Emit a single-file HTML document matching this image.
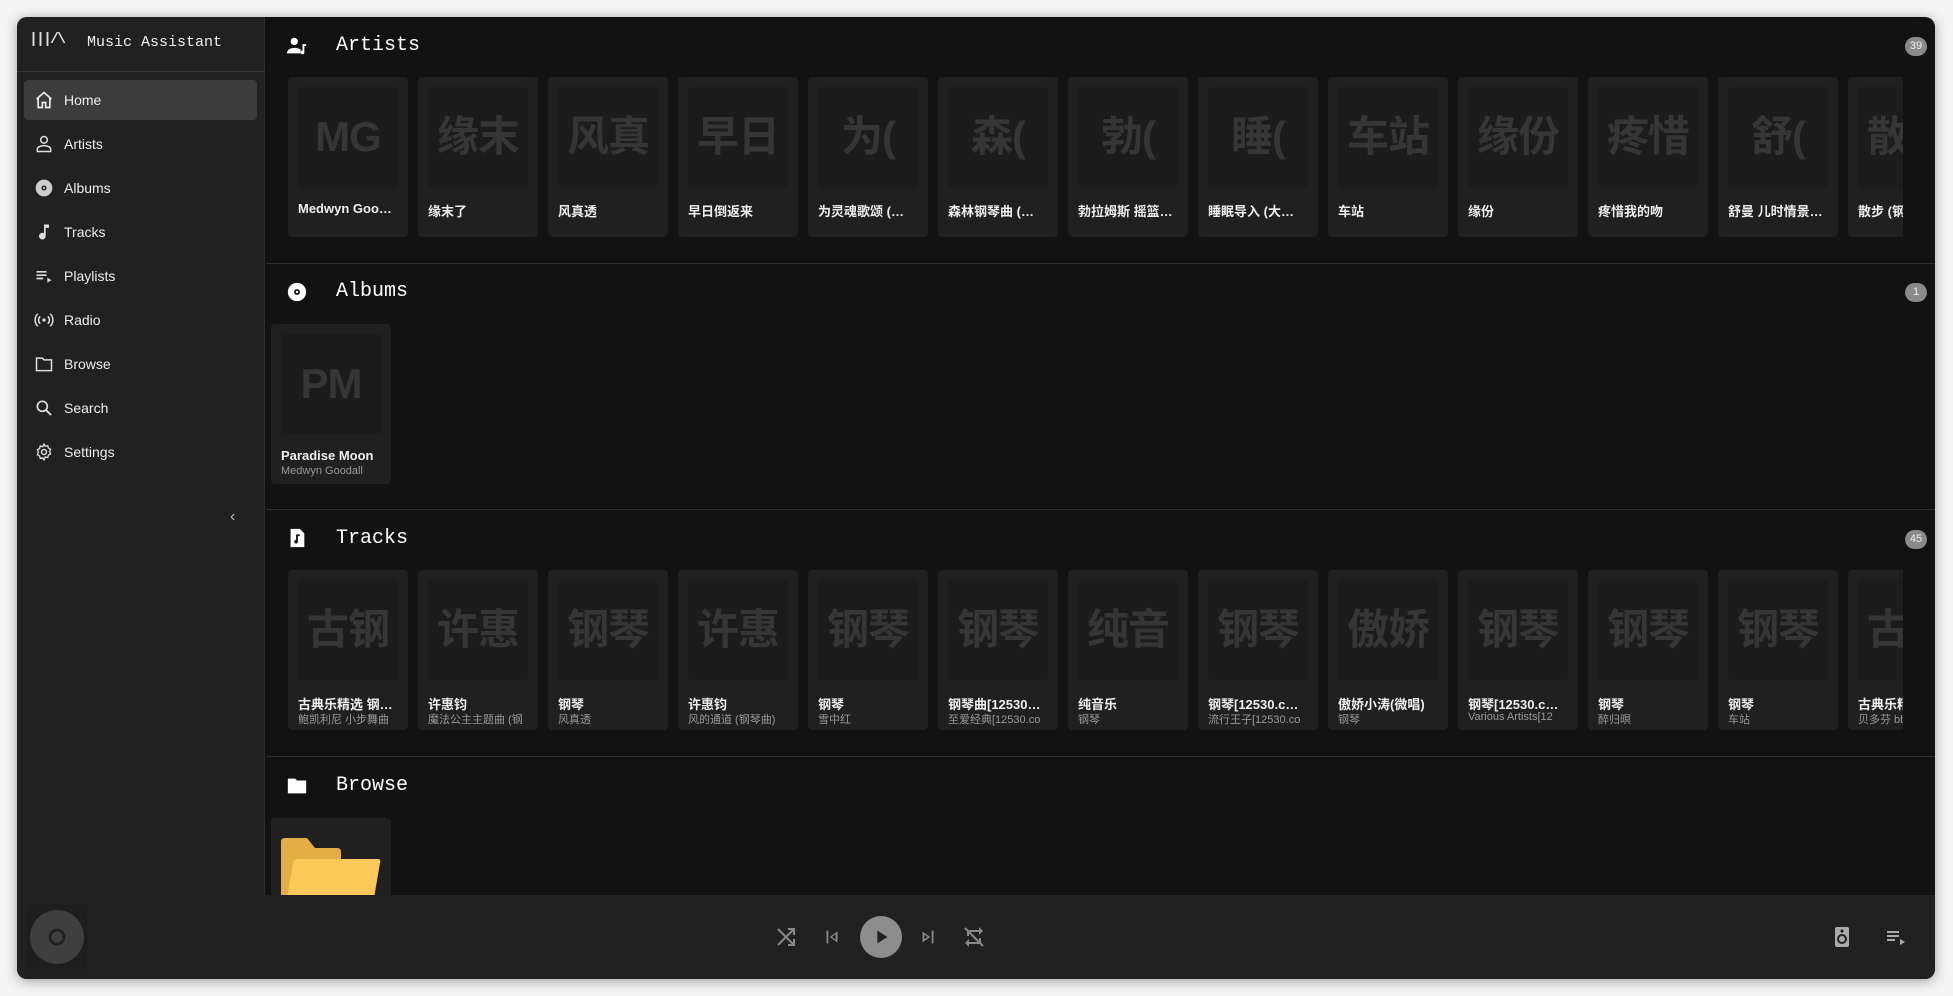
<!DOCTYPE html><html><head><meta charset="utf-8"><style>
*{box-sizing:border-box;margin:0;padding:0}
body{width:1953px;height:996px;background:#f4f4f4;position:relative;overflow:hidden;font-family:"Liberation Sans","Noto Sans CJK SC",sans-serif;color:#fff}
.win{position:absolute;left:17px;top:17px;width:1918px;height:962px;background:#121212;border-radius:10px;overflow:hidden;box-shadow:0 2px 12px rgba(0,0,0,.35)}
.side{position:absolute;left:0;top:0;width:248px;height:878px;background:#212121;border-right:1px solid #2e2e2e}
.logo{position:absolute;left:12px;top:14px;font:bold 15px "Liberation Mono",monospace;color:#ddd;letter-spacing:-2px}
.apptitle{position:absolute;left:70px;top:17px;font:15px "Liberation Mono",monospace;color:#eee}
.hdiv{position:absolute;left:0;top:54px;width:248px;height:1px;background:#333}
.nav{position:absolute;left:7px;width:233px;height:40px;border-radius:4px;font-size:14px;color:#eee}
.nav.act{background:#3c3c3c}
.nav svg{position:absolute;left:10px;top:10px}
.nav span{position:absolute;left:40px;top:12px}
.main{position:absolute;left:249px;top:0;right:0;height:878px}
.sh{position:absolute;left:0;right:0;height:1px;background:#2e2e2e}
.stitle{position:absolute;left:70px;font:20px "Liberation Mono",monospace;color:#fff}
.sicon{position:absolute;left:20px}
.badge{position:absolute;right:8px;width:22px;height:19px;border-radius:10px;background:#8a8a8a;font-size:11px;text-align:center;line-height:19px;color:#eee}
.row{position:absolute;left:22px;width:1615px;overflow:hidden;height:162px}
.card{position:absolute;top:0;width:120px;height:160px;background:#202020;border-radius:4px}
.card .im{position:absolute;left:10px;top:10px;width:100px;height:100px;background:#1c1c1c;border-radius:3px;font-weight:bold;font-size:42px;color:#363636;text-align:center;line-height:100px;white-space:nowrap;overflow:hidden;letter-spacing:-1px}
.card .t{position:absolute;left:10px;top:124px;width:104px;font-size:13px;font-weight:bold;white-space:nowrap;overflow:hidden;text-overflow:ellipsis;color:#eee}
.card .s{position:absolute;left:10px;top:141px;width:104px;font-size:11px;white-space:nowrap;overflow:hidden;color:#999}
.bar{position:absolute;left:0;top:878px;width:1918px;height:84px;background:#212121}
</style></head><body><div class="win">
<div class="side">
<div class="logo">|||/\</div><div class="apptitle">Music Assistant</div>
<div class="hdiv"></div>
<div class="nav act" style="top:63px"><svg width="20" height="20" viewBox="0 0 24 24"><path fill="none" stroke="#eee" stroke-width="2" d="M3 11 12 3l9 8M5 9v12h5v-6h4v6h5V9"/></svg><span>Home</span></div>
<div class="nav" style="top:107px"><svg width="20" height="20" viewBox="0 0 24 24"><circle cx="12" cy="7" r="4" fill="none" stroke="#ddd" stroke-width="1.8"/><path d="M4 21v-3c0-2 4-4 8-4s8 2 8 4v3z" fill="none" stroke="#ddd" stroke-width="1.8"/></svg><span>Artists</span></div>
<div class="nav" style="top:151px"><svg width="20" height="20" viewBox="0 0 24 24"><circle cx="12" cy="12" r="10" fill="#ccc"/><circle cx="12" cy="12" r="3" fill="#212121"/><circle cx="12" cy="12" r="1.3" fill="#ccc"/></svg><span>Albums</span></div>
<div class="nav" style="top:195px"><svg width="20" height="20" viewBox="0 0 24 24"><path d="M12 3v10.5a4 4 0 1 0 2 3.5V7h4V3z" fill="#ddd"/></svg><span>Tracks</span></div>
<div class="nav" style="top:239px"><svg width="20" height="20" viewBox="0 0 24 24"><path d="M3 6h12v2H3zm0 4h12v2H3zm0 4h8v2H3zm13 0 5 3-5 3z" fill="#ddd"/></svg><span>Playlists</span></div>
<div class="nav" style="top:283px"><svg width="20" height="20" viewBox="0 0 24 24"><circle cx="12" cy="12" r="2" fill="#ddd"/><path d="M7.5 7.5a6 6 0 0 0 0 9M16.5 7.5a6 6 0 0 1 0 9M4.5 4.5a10.5 10.5 0 0 0 0 15M19.5 4.5a10.5 10.5 0 0 1 0 15" fill="none" stroke="#ddd" stroke-width="1.8"/></svg><span>Radio</span></div>
<div class="nav" style="top:327px"><svg width="20" height="20" viewBox="0 0 24 24"><path d="M3 5h7l2 2h9v13H3z" fill="none" stroke="#ddd" stroke-width="1.8"/></svg><span>Browse</span></div>
<div class="nav" style="top:371px"><svg width="20" height="20" viewBox="0 0 24 24"><circle cx="10" cy="10" r="6" fill="none" stroke="#ddd" stroke-width="2"/><path d="m14.5 14.5 6 6" stroke="#ddd" stroke-width="2.2"/></svg><span>Search</span></div>
<div class="nav" style="top:415px"><svg width="20" height="20" viewBox="0 0 24 24"><circle cx="12" cy="12" r="3" fill="none" stroke="#ddd" stroke-width="1.8"/><path d="M12 2.5l1.5 2.6 3-.8.8 3 2.6 1.5-1.2 2.7 1.2 2.7-2.6 1.5-.8 3-3-.8L12 21.5l-1.5-2.6-3 .8-.8-3-2.6-1.5L5.3 12 4.1 9.3l2.6-1.5.8-3 3 .8z" fill="none" stroke="#ddd" stroke-width="1.6"/></svg><span>Settings</span></div>
<div style="position:absolute;left:213px;top:491px;font-size:16px;color:#bbb">&#8249;</div>
</div>
<div class="main">
<svg class="sicon" style="top:18px" width="22" height="22" viewBox="0 0 24 24"><circle cx="9" cy="7" r="4" fill="#fff"/><path d="M1 20c0-4 4-6 8-6s6 1 7 2v4z" fill="#fff"/><path d="M18 10h4v2h-2v7a2 2 0 1 1-2-2z" fill="#fff"/></svg>
<div class="stitle" style="top:17px">Artists</div><div class="badge" style="top:20px">39</div>
<div class="row" style="top:60px">
<div class="card" style="left:0"><div class="im">MG</div><div class="t">Medwyn Goo…</div></div>
<div class="card" style="left:130px"><div class="im">缘末</div><div class="t">缘末了</div></div>
<div class="card" style="left:260px"><div class="im">风真</div><div class="t">风真透</div></div>
<div class="card" style="left:390px"><div class="im">早日</div><div class="t">早日倒返来</div></div>
<div class="card" style="left:520px"><div class="im">为(</div><div class="t">为灵魂歌颂 (…</div></div>
<div class="card" style="left:650px"><div class="im">森(</div><div class="t">森林钢琴曲 (…</div></div>
<div class="card" style="left:780px"><div class="im">勃(</div><div class="t">勃拉姆斯 摇篮…</div></div>
<div class="card" style="left:910px"><div class="im">睡(</div><div class="t">睡眠导入 (大…</div></div>
<div class="card" style="left:1040px"><div class="im">车站</div><div class="t">车站</div></div>
<div class="card" style="left:1170px"><div class="im">缘份</div><div class="t">缘份</div></div>
<div class="card" style="left:1300px"><div class="im">疼惜</div><div class="t">疼惜我的吻</div></div>
<div class="card" style="left:1430px"><div class="im">舒(</div><div class="t">舒曼 儿时情景…</div></div>
<div class="card" style="left:1560px"><div class="im">散步</div><div class="t">散步 (钢琴曲)</div></div>
</div>
<div class="sh" style="top:246px"></div>
<svg class="sicon" style="top:264px" width="22" height="22" viewBox="0 0 24 24"><circle cx="12" cy="12" r="10" fill="#fff"/><circle cx="12" cy="12" r="3.2" fill="#121212"/><circle cx="12" cy="12" r="1.3" fill="#fff"/></svg>
<div class="stitle" style="top:263px">Albums</div><div class="badge" style="top:266px">1</div>
<div class="card" style="left:5px;top:307px"><div class="im">PM</div><div class="t">Paradise Moon</div><div class="s">Medwyn Goodall</div></div>
<div class="sh" style="top:492px"></div>
<svg class="sicon" style="top:510px" width="22" height="22" viewBox="0 0 24 24"><path d="M5 2h10l5 5v15H5z" fill="#fff"/><path d="M11 8h4v2h-2v6a2 2 0 1 1-2-2z" fill="#121212"/></svg>
<div class="stitle" style="top:510px">Tracks</div><div class="badge" style="top:513px">45</div>
<div class="row" style="top:553px">
<div class="card" style="left:0"><div class="im">古钢</div><div class="t">古典乐精选 钢…</div><div class="s">鲍凯利尼 小步舞曲</div></div>
<div class="card" style="left:130px"><div class="im">许惠</div><div class="t">许惠钧</div><div class="s">魔法公主主题曲 (钢</div></div>
<div class="card" style="left:260px"><div class="im">钢琴</div><div class="t">钢琴</div><div class="s">风真透</div></div>
<div class="card" style="left:390px"><div class="im">许惠</div><div class="t">许惠钧</div><div class="s">风的通道 (钢琴曲)</div></div>
<div class="card" style="left:520px"><div class="im">钢琴</div><div class="t">钢琴</div><div class="s">雪中红</div></div>
<div class="card" style="left:650px"><div class="im">钢琴</div><div class="t">钢琴曲[12530…</div><div class="s">至爱经典[12530.co</div></div>
<div class="card" style="left:780px"><div class="im">纯音</div><div class="t">纯音乐</div><div class="s">钢琴</div></div>
<div class="card" style="left:910px"><div class="im">钢琴</div><div class="t">钢琴[12530.c…</div><div class="s">流行王子[12530.co</div></div>
<div class="card" style="left:1040px"><div class="im">傲娇</div><div class="t">傲娇小涛(微唱)</div><div class="s">钢琴</div></div>
<div class="card" style="left:1170px"><div class="im">钢琴</div><div class="t">钢琴[12530.c…</div><div class="s">Various Artists[12</div></div>
<div class="card" style="left:1300px"><div class="im">钢琴</div><div class="t">钢琴</div><div class="s">醉归暝</div></div>
<div class="card" style="left:1430px"><div class="im">钢琴</div><div class="t">钢琴</div><div class="s">车站</div></div>
<div class="card" style="left:1560px"><div class="im">古典</div><div class="t">古典乐精选</div><div class="s">贝多芬 bb</div></div>
</div>
<div class="sh" style="top:739px"></div>
<svg class="sicon" style="top:758px" width="22" height="22" viewBox="0 0 24 24"><path d="M2 4h8l2 2h10v14H2z" fill="#fff"/></svg>
<div class="stitle" style="top:757px">Browse</div>
<div class="card" style="left:5px;top:801px;height:90px"><svg style="position:absolute;left:10px;top:20px" width="100" height="60" viewBox="0 0 100 60"><path d="M0 4q0-4 4-4h22l8 10h22q4 0 4 4v46H0z" fill="#e4ad45"/><path d="M12 25q1-4 5-4h80q3 0 2 4l-6 35H6z" fill="#fcc95a"/></svg></div>
</div>
<div class="bar">
<div style="position:absolute;left:10px;top:10px;width:60px;height:64px;background:#1e1e1e"></div>
<svg style="position:absolute;left:12px;top:14px" width="56" height="56" viewBox="0 0 56 56"><circle cx="28" cy="28" r="27" fill="#3f3f3f"/><circle cx="28" cy="28" r="7" fill="none" stroke="#222" stroke-width="3"/></svg>
<svg style="position:absolute;left:757px;top:30px" width="24" height="24" viewBox="0 0 24 24"><path d="M4 4l16 16M14 20h6v-6M4 20 20 4M14 4h6v6" fill="none" stroke="#888" stroke-width="2"/></svg>
<svg style="position:absolute;left:804px;top:31px" width="22" height="22" viewBox="0 0 24 24"><path d="M6 5h2v14H6zm3.5 7L18 6v12z" fill="#888"/><path d="M12 12l4-3v6z" fill="#212121"/></svg>
<div style="position:absolute;left:843px;top:21px;width:42px;height:42px;border-radius:50%;background:#8d8d8d"></div>
<svg style="position:absolute;left:853px;top:31px" width="22" height="22" viewBox="0 0 24 24"><path d="M8 5v14l11-7z" fill="#212121"/></svg>
<svg style="position:absolute;left:900px;top:31px" width="22" height="22" viewBox="0 0 24 24"><path d="M16 5h2v14h-2zM6 6l8.5 6L6 18z" fill="#888"/><path d="M8 9.5l3.5 2.5L8 14.5z" fill="#212121"/></svg>
<svg style="position:absolute;left:945px;top:30px" width="24" height="24" viewBox="0 0 24 24"><path d="M7 7h10v3l4-4-4-4v3H5v6h2zm10 10H7v-3l-4 4 4 4v-3h12v-6h-2z" fill="#888"/><path d="M3 3l18 18" stroke="#888" stroke-width="2"/></svg>
<svg style="position:absolute;left:1813px;top:30px" width="24" height="24" viewBox="0 0 24 24"><rect x="5" y="2" width="14" height="20" rx="2" fill="#aaa"/><circle cx="12" cy="6" r="1.6" fill="#212121"/><circle cx="12" cy="14" r="4" fill="none" stroke="#212121" stroke-width="2"/></svg>
<svg style="position:absolute;left:1867px;top:30px" width="24" height="24" viewBox="0 0 24 24"><path d="M3 6h12v2H3zm0 4h12v2H3zm0 4h8v2H3zm13 0 5 3-5 3z" fill="#aaa"/></svg>
</div>
</div></body></html>
